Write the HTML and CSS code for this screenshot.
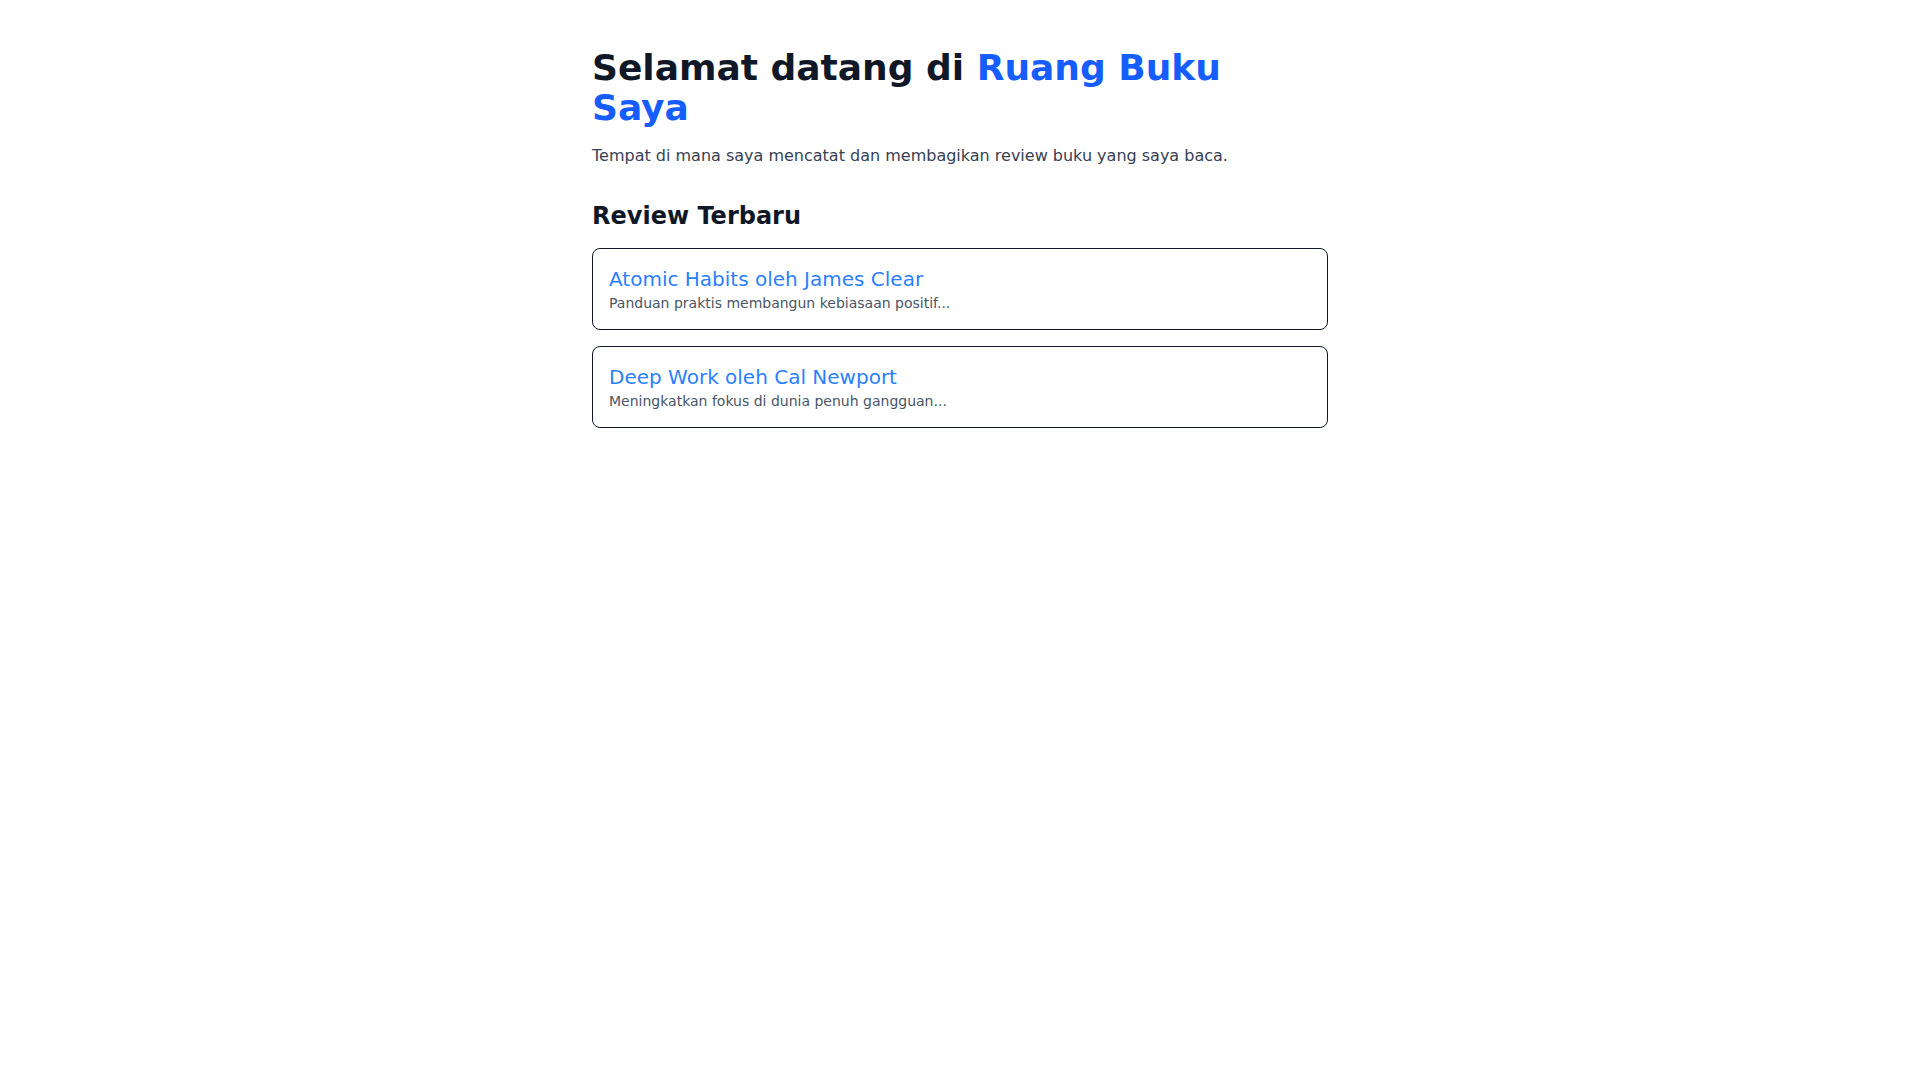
FILE: index.html
```html
<!DOCTYPE html>
<html lang="id">
<head>
<meta charset="utf-8">
<title>Ruang Buku Saya</title>
<link rel="stylesheet" href="styles.css">
</head>
<body>
<main class="container">
  <h1 class="title">Selamat datang di <span class="accent">Ruang Buku Saya</span></h1>
  <p class="intro">Tempat di mana saya mencatat dan membagikan review buku yang saya baca.</p>
  <h2 class="section-title">Review Terbaru</h2>
  <div class="list">
    <div class="card">
      <h3 class="card-title">Atomic Habits oleh James Clear</h3>
      <p class="card-desc">Panduan praktis membangun kebiasaan positif...</p>
    </div>
    <div class="card">
      <h3 class="card-title">Deep Work oleh Cal Newport</h3>
      <p class="card-desc">Meningkatkan fokus di dunia penuh gangguan...</p>
    </div>
  </div>
</main>
</body>
</html>
```
FILE: styles.css
```css
html, body {
  margin: 0;
  padding: 0;
  background: #ffffff;
}
body {
  font-family: "DejaVu Sans", sans-serif;
  color: #101828;
}
h1, h2, h3, p { margin: 0; }
.container {
  max-width: 768px;
  margin: 0 auto;
  padding: 48px 16px;
  box-sizing: border-box;
}
.title {
  font-size: 36px;
  line-height: 40px;
  font-weight: 700;
  color: #101828;
}
.accent { color: #155dfc; }
.intro {
  margin-top: 16px;
  font-size: 16px;
  line-height: 24px;
  color: #364153;
}
.section-title {
  margin-top: 32px;
  font-size: 24px;
  line-height: 32px;
  font-weight: 700;
  color: #101828;
}
.list {
  margin-top: 16px;
  display: flex;
  flex-direction: column;
  gap: 16px;
}
.card {
  border: 1px solid #101828;
  border-radius: 8px;
  padding: 16px;
}
.card-title {
  font-size: 20px;
  line-height: 28px;
  font-weight: 400;
  color: #2b7fff;
}
.card-desc {
  font-size: 14px;
  line-height: 20px;
  color: #4a5565;
}
```
